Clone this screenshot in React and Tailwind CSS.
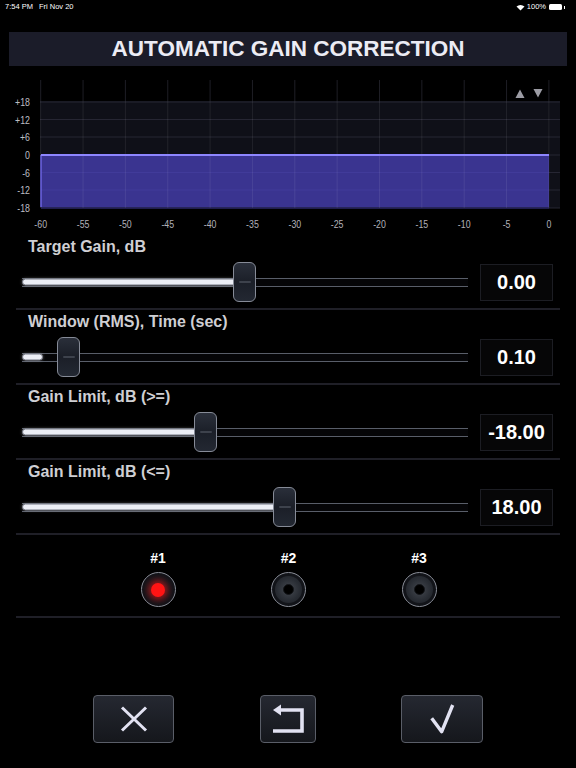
import React from "react";

const xLabels = ["-60", "-55", "-50", "-45", "-40", "-35", "-30", "-25", "-20", "-15", "-10", "-5", "0"];
const yRows = [
  { y: 36, t: "+18" },
  { y: 53.5, t: "+12" },
  { y: 71, t: "+6" },
  { y: 89, t: "0" },
  { y: 106.5, t: "-6" },
  { y: 124, t: "-12" },
  { y: 142, t: "-18" },
];

function Chart() {
  const xs = xLabels.map((_, i) => 40.7 + i * 42.35);
  return (
    <svg width="576" height="169" className="block" style={{ fontFamily: "'Liberation Sans', Arial, sans-serif" }}>
      {xs.map((x, i) => (
        <line key={"va" + i} x1={x} x2={x} y1={14} y2={36} stroke="#1e1e25" strokeWidth="1" />
      ))}
      <rect x="40" y="35" width="520" height="107" fill="#0f1018" />
      <rect x="41" y="89" width="508" height="52" fill="#3a3490" />
      {yRows.map((r, i) =>
        r.y > 89 ? (
          <g key={"h" + i}>
            <line x1={41} x2={549} y1={r.y} y2={r.y} stroke="#413b9a" strokeWidth="1" />
            <line x1={549} x2={560} y1={r.y} y2={r.y} stroke="#262633" strokeWidth="1" />
          </g>
        ) : (
          <line key={"h" + i} x1={40} x2={560} y1={r.y} y2={r.y} stroke="#262633" strokeWidth="1" />
        )
      )}
      {xs.map((x, i) => (
        <line key={"vb" + i} x1={x} x2={x} y1={35} y2={142} stroke="#ffffff" strokeOpacity="0.08" strokeWidth="1" />
      ))}
      <line x1="41" x2="41" y1="89" y2="141" stroke="#6a62e0" strokeWidth="1.5" />
      <line x1="41" x2="549" y1="89" y2="89" stroke="#8e86ff" strokeWidth="2" />
      {yRows.map((r, i) => (
        <text
          key={"yl" + i}
          transform={`translate(30 ${r.y + 4}) scale(0.8 1)`}
          textAnchor="end"
          fontSize="11"
          fill="#bdbdc4"
        >
          {r.t}
        </text>
      ))}
      {xs.map((x, i) => (
        <text
          key={"xl" + i}
          transform={`translate(${x} 162) scale(0.8 1)`}
          textAnchor="middle"
          fontSize="11"
          fill="#b0b0b8"
        >
          {xLabels[i]}
        </text>
      ))}
      <polygon points="515.5,32 524.5,32 520,23.5" fill="#9c9ca4" />
      <polygon points="533.5,23 542.5,23 538,31.5" fill="#9c9ca4" />
    </svg>
  );
}

const sliders = [
  { label: "Target Gain, dB", value: "0.00", thumb: 211, fill: 216 },
  { label: "Window (RMS), Time (sec)", value: "0.10", thumb: 35, fill: 21 },
  { label: "Gain Limit, dB (>=)", value: "-18.00", thumb: 172, fill: 176 },
  { label: "Gain Limit, dB (<=)", value: "18.00", thumb: 251, fill: 255 },
];

function SliderRow({ label, value, thumb, fill }) {
  return (
    <div className="ml-4 w-[544px] h-[75px] border-b-2 border-[#1f1f27] flex flex-col">
      <div className="pl-3 pt-[4px] h-[21px] text-[16px] leading-[16px] font-bold text-[#cfcfd3]">{label}</div>
      <div className="flex items-center h-[52px] pl-[6px]">
        <div className="relative w-[446px] h-[40px] flex items-center">
          <div className="w-full h-[9px] border-y border-[#595e69] bg-[#050507]" />
          <div
            className="absolute left-0 top-1/2 -translate-y-1/2 h-[7px] rounded-full bg-[#eceef5] border-[1.5px] border-[#737783] shadow-[0_0_3px_rgba(255,255,255,0.35)]"
            style={{ width: fill + "px" }}
          />
          <div
            className="absolute top-0 w-[23px] h-[40px] rounded-[6px] border-[1.5px] border-[#868b97] bg-gradient-to-b from-[#2a2f3a] via-[#1b1f28] to-[#232832] flex items-center justify-center"
            style={{ left: thumb + "px" }}
          >
            <div className="w-[12px] h-[2px] bg-[#3d424c] rounded-full" />
          </div>
        </div>
        <div className="ml-[12px] w-[73px] h-[37px] border border-[#1c1d23] bg-[#060607] flex items-center justify-center text-[20px] font-bold text-white">
          {value}
        </div>
      </div>
    </div>
  );
}

function Radio({ label, active }) {
  return (
    <div className="w-[70px] flex flex-col items-center">
      <div className="h-[14px] leading-[14px] text-[14px] font-bold text-white">{label}</div>
      <div className="mt-[7px] w-[35px] h-[35px] rounded-full border-[1.5px] border-[#8a8e98] bg-[radial-gradient(circle,#1c1f26_0%,#0c0d11_100%)] flex items-center justify-center">
        {active ? (
          <div className="w-[14px] h-[14px] rounded-full bg-[#ff1414] shadow-[0_0_6px_3px_rgba(255,20,20,0.55)]" />
        ) : (
          <div className="w-[27px] h-[27px] rounded-full bg-[radial-gradient(circle,#44484f_0%,#2a2e35_55%,#181b20_100%)] flex items-center justify-center">
            <div className="w-[11px] h-[11px] rounded-full bg-black border border-[#14161a]" />
          </div>
        )}
      </div>
    </div>
  );
}

const btn =
  "h-[48px] rounded-[4px] border-[1.5px] border-[#5a5e68] bg-gradient-to-b from-[#252831] to-[#15171c] flex items-center justify-center";

export default function App() {
  return (
    <div className="w-[576px] h-[768px] bg-black overflow-hidden font-['Liberation_Sans',Arial,sans-serif] text-white">
      {/* status bar */}
      <div className="h-[14px] flex items-center px-[5px] text-[7.5px] text-white">
        <span>7:54 PM</span>
        <span className="ml-[6px]">Fri Nov 20</span>
        <div className="ml-auto flex items-center gap-[2px] pr-[6px]">
          <svg width="9" height="7" viewBox="0 0 9 7">
            <path d="M0.5 2.5 A6 6 0 0 1 8.5 2.5 L4.5 6.5 Z" fill="#ffffff" />
          </svg>
          <span>100%</span>
          <div className="ml-[1px] w-[13px] h-[6px] rounded-[1.5px] bg-white" />
          <div className="w-[1px] h-[3px] bg-white" />
        </div>
      </div>

      {/* title */}
      <div className="mt-[18px] mx-[9px] h-[34px] bg-[#1b1c29] flex items-center justify-center text-[22.5px] font-bold text-[#ececf4]">
        AUTOMATIC GAIN CORRECTION
      </div>

      <Chart />

      {sliders.map((s, i) => (
        <SliderRow key={i} {...s} />
      ))}

      {/* presets */}
      <div className="ml-4 w-[544px] h-[83px] border-b-2 border-[#1f1f27] flex pl-[107px] gap-[60.5px] pt-[16px]">
        <Radio label="#1" active />
        <Radio label="#2" />
        <Radio label="#3" />
      </div>

      {/* buttons */}
      <div className="mt-[77px] flex items-start pl-[93px]">
        <div className={btn + " w-[81px]"}>
          <svg width="28" height="26" viewBox="0 0 28 26">
            <path d="M2 1.5 L26 24.5 M26 1.5 L2 24.5" stroke="#e2e2f2" strokeWidth="3" />
          </svg>
        </div>
        <div className={btn + " ml-[86px] w-[56px]"}>
          <svg width="32" height="32" viewBox="0 0 32 32">
            <polygon points="1,7 9,1.5 9,12.5" fill="#e2e2f2" />
            <path d="M8 7 H30 V28 H1" stroke="#e2e2f2" strokeWidth="3.6" fill="none" />
          </svg>
        </div>
        <div className={btn + " ml-[85px] w-[82px]"}>
          <svg width="26" height="32" viewBox="0 0 26 32">
            <path d="M2.7 15.3 L12.7 28.7 L23.7 2" stroke="#e2e2f2" strokeWidth="3.4" fill="none" strokeLinejoin="round" />
          </svg>
        </div>
      </div>
    </div>
  );
}
